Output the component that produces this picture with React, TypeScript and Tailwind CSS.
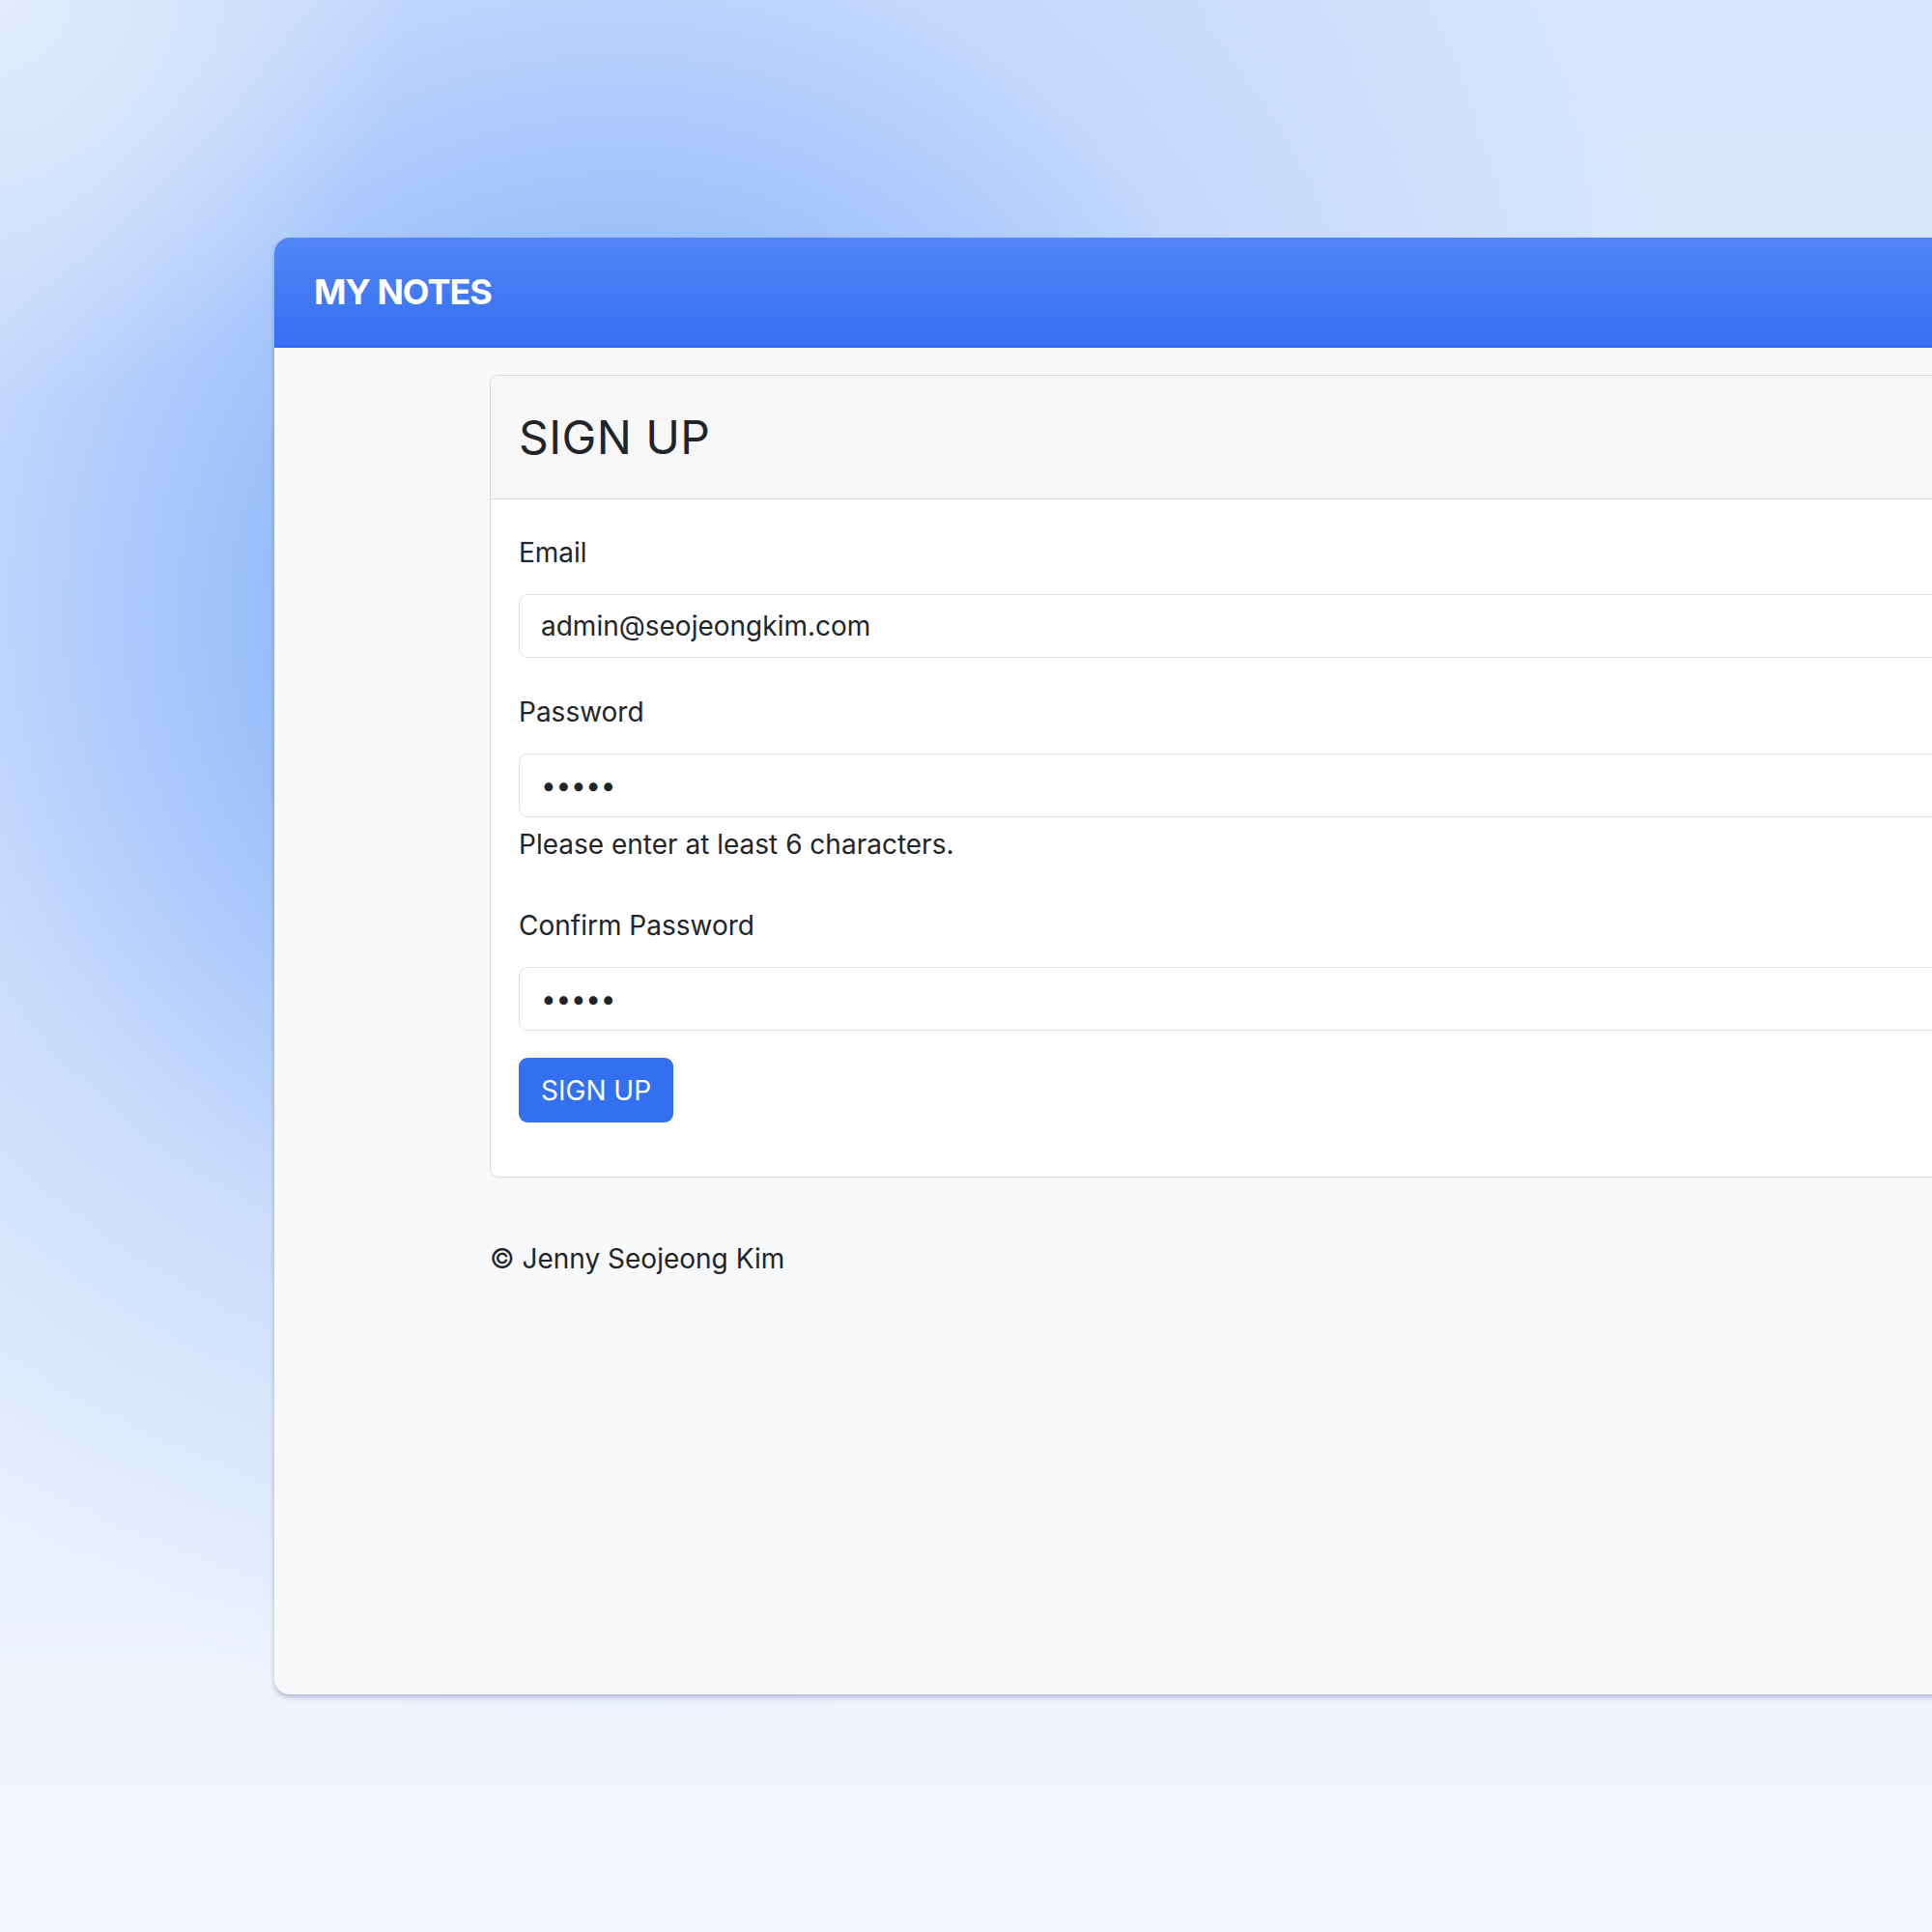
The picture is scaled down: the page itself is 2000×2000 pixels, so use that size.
import React from "react";

const font = { fontFamily: "Inter, 'Noto Sans', sans-serif" };

function Field({ label, value, dots }: { label: string; value: string; dots?: boolean }) {
  return (
    <div className="flex flex-col">
      <label className="text-[28px] leading-[42px] text-[#212529]">{label}</label>
      <div className="mt-[22px] h-[66px] w-full rounded-[9px] border border-[#dee2e6] bg-white pl-[22px] flex items-center">
        {dots ? (
          <span className="text-[28px] tracking-[-0.3px] text-[#212529] leading-none">•••••</span>
        ) : (
          <span className="text-[28px] text-[#212529]">{value}</span>
        )}
      </div>
    </div>
  );
}

export default function App() {
  return (
    <div
      style={font}
      className="relative w-[2000px] h-[2000px] overflow-hidden bg-[#ebf1fd] bg-[radial-gradient(ellipse_420px_420px_at_0px_0px,rgba(230,238,253,0.85)_0%,rgba(230,238,253,0)_100%),radial-gradient(ellipse_1150px_1150px_at_640px_640px,rgba(140,181,251,1)_0%,rgba(150,188,251,0.95)_32%,rgba(185,210,252,0.6)_62%,rgba(220,232,253,0)_100%),linear-gradient(180deg,#d6e4fd_0%,#dde8fd_35%,#e9f0fd_75%,#f2f6fe_100%)]"
    >
      <div className="pl-[284px] pt-[246px]">
        <div className="w-[1800px] h-[1508px] rounded-[16px] bg-[#f8f9fa] shadow-[0_3px_5px_rgba(40,50,90,0.3)] flex flex-col overflow-hidden">
          <div className="h-[114px] shrink-0 bg-[linear-gradient(180deg,#5286f6_0%,#3570f2_100%)] border-b-2 border-[#2c68ee] flex items-center pl-[41px]">
            <span className="text-[36px] font-bold text-white tracking-[-1px]">MY NOTES</span>
          </div>
          <div className="pl-[223px] pt-[28px] flex flex-col">
            <div className="rounded-l-[9px] border border-r-0 border-[#d6d8db] bg-white overflow-hidden">
              <div className="h-[128px] bg-[#f7f7f7] border-b border-[#d6d8db] flex items-center pl-[29px]">
                <h2 className="text-[48px] font-normal text-[#212529] tracking-[0.4px]">SIGN UP</h2>
              </div>
              <div className="pl-[29px] pr-[29px] pt-[34px] pb-[56px] flex flex-col">
                <Field label="Email" value="admin@seojeongkim.com" />
                <div className="mt-[35px]">
                  <Field label="Password" value="" dots />
                </div>
                <div className="mt-[7px] text-[28px] leading-[42px] text-[#212529]">
                  Please enter at least 6 characters.
                </div>
                <div className="mt-[42px]">
                  <Field label="Confirm Password" value="" dots />
                </div>
                <div className="mt-[28px]">
                  <button className="h-[67px] px-[23px] rounded-[9px] bg-[#3370f0] text-white text-[28px] leading-none">
                    SIGN UP
                  </button>
                </div>
              </div>
            </div>
            <div className="mt-[63px] text-[28px] leading-[42px] text-[#212529]">© Jenny Seojeong Kim</div>
          </div>
        </div>
      </div>
    </div>
  );
}
